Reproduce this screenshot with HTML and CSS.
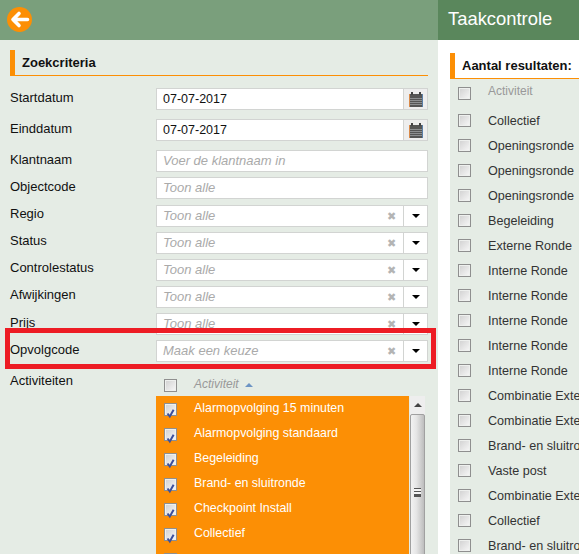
FILE: index.html
```html
<!DOCTYPE html>
<html lang="en">
<head>
    <meta charset="UTF-8">
    <meta name="viewport" content="width=device-width, initial-scale=1.0">
    <title>Taakcontrole</title>
    <link rel="stylesheet" href="styles.css">
</head>
<body>
    <div class="page">
        <div class="search">
            <div class="topbar">
                <a class="back" href="#">
                    <svg width="25" height="25" viewBox="0 0 25 25">
                        <circle cx="12.5" cy="12.5" r="12.5" fill="#fc8f05"/>
                        <path d="M20.5 12.5H6M12 6.5l-6 6 6 6" fill="none" stroke="#fff" stroke-width="3.6" stroke-linecap="round" stroke-linejoin="round"/>
                    </svg>
                </a>
            </div>

            <div class="search-body">
                <h2 class="section-title">Zoekcriteria</h2>

                <div class="row row-date">
                    <label>Startdatum</label>
                    <div class="field">
                        <span class="value date">07-07-2017</span>
                        <span class="addon addon-grey">
                            <svg class="cal" width="14" height="15" viewBox="0 0 14 15"><use href="#calendar"/></svg>
                        </span>
                    </div>
                </div>
                <div class="row row-date">
                    <label>Einddatum</label>
                    <div class="field">
                        <span class="value date">07-07-2017</span>
                        <span class="addon addon-grey">
                            <svg class="cal" width="14" height="15" viewBox="0 0 14 15"><use href="#calendar"/></svg>
                        </span>
                    </div>
                </div>
                <div class="row">
                    <label>Klantnaam</label>
                    <div class="field"><span class="value hint">Voer de klantnaam in</span></div>
                </div>
                <div class="row row-wide">
                    <label>Objectcode</label>
                    <div class="field"><span class="value hint">Toon alle</span></div>
                </div>
                <div class="row row-up">
                    <label>Regio</label>
                    <div class="field">
                        <span class="value hint">Toon alle</span>
                        <span class="clear">&#10006;</span>
                        <span class="addon"><i class="caret"></i></span>
                    </div>
                </div>
                <div class="row row-up">
                    <label>Status</label>
                    <div class="field">
                        <span class="value hint">Toon alle</span>
                        <span class="clear">&#10006;</span>
                        <span class="addon"><i class="caret"></i></span>
                    </div>
                </div>
                <div class="row row-up">
                    <label>Controlestatus</label>
                    <div class="field">
                        <span class="value hint">Toon alle</span>
                        <span class="clear">&#10006;</span>
                        <span class="addon"><i class="caret"></i></span>
                    </div>
                </div>
                <div class="row row-up">
                    <label>Afwijkingen</label>
                    <div class="field">
                        <span class="value hint">Toon alle</span>
                        <span class="clear">&#10006;</span>
                        <span class="addon"><i class="caret"></i></span>
                    </div>
                </div>
                <div class="row">
                    <label>Prijs</label>
                    <div class="field">
                        <span class="value hint">Toon alle</span>
                        <span class="clear">&#10006;</span>
                        <span class="addon"><i class="caret"></i></span>
                    </div>
                </div>
                <div class="row">
                    <label>Opvolgcode</label>
                    <div class="field">
                        <span class="value hint">Maak een keuze</span>
                        <span class="clear">&#10006;</span>
                        <span class="addon"><i class="caret"></i></span>
                    </div>
                </div>

                <div class="activities">
                    <label>Activiteiten</label>
                    <div class="act-table">
                        <div class="act-head">
                            <span class="check"></span>
                            <span class="act-title">Activiteit</span>
                            <i class="sort-up"></i>
                        </div>
                        <div class="act-scroll">
                            <ul class="act-list">
                                <li><span class="check on"><svg width="11" height="11" viewBox="0 0 11 11"><use href="#tick"/></svg></span>Alarmopvolging 15 minuten</li>
                                <li><span class="check on"><svg width="11" height="11" viewBox="0 0 11 11"><use href="#tick"/></svg></span>Alarmopvolging standaard</li>
                                <li><span class="check on"><svg width="11" height="11" viewBox="0 0 11 11"><use href="#tick"/></svg></span>Begeleiding</li>
                                <li><span class="check on"><svg width="11" height="11" viewBox="0 0 11 11"><use href="#tick"/></svg></span>Brand- en sluitronde</li>
                                <li><span class="check on"><svg width="11" height="11" viewBox="0 0 11 11"><use href="#tick"/></svg></span>Checkpoint Install</li>
                                <li><span class="check on"><svg width="11" height="11" viewBox="0 0 11 11"><use href="#tick"/></svg></span>Collectief</li>
                                <li><span class="check"></span></li>
                            </ul>
                            <div class="scrollbar">
                                <div class="scroll-up"><i></i></div>
                                <div class="scroll-thumb"><i></i></div>
                            </div>
                        </div>
                    </div>
                </div>
            </div>

            <div class="marker"></div>
        </div>

        <div class="results">
            <div class="results-bar">Taakcontrole</div>
            <div class="results-body">
                <h2 class="section-title">Aantal resultaten:</h2>
                <ul class="res-list">
                    <li class="res-head"><span class="check"></span>Activiteit</li>
                    <li><span class="check"></span>Collectief</li>
                    <li><span class="check"></span>Openingsronde</li>
                    <li><span class="check"></span>Openingsronde</li>
                    <li><span class="check"></span>Openingsronde</li>
                    <li><span class="check"></span>Begeleiding</li>
                    <li><span class="check"></span>Externe Ronde</li>
                    <li><span class="check"></span>Interne Ronde</li>
                    <li><span class="check"></span>Interne Ronde</li>
                    <li><span class="check"></span>Interne Ronde</li>
                    <li><span class="check"></span>Interne Ronde</li>
                    <li><span class="check"></span>Interne Ronde</li>
                    <li><span class="check"></span>Combinatie Externe Ronde</li>
                    <li><span class="check"></span>Combinatie Externe Ronde</li>
                    <li><span class="check"></span>Brand- en sluitronde</li>
                    <li><span class="check"></span>Vaste post</li>
                    <li><span class="check"></span>Combinatie Externe Ronde</li>
                    <li><span class="check"></span>Collectief</li>
                    <li><span class="check"></span>Brand- en sluitronde</li>
                </ul>
            </div>
        </div>
    </div>

    <!-- shared icons -->
    <svg class="defs" width="0" height="0">
        <symbol id="calendar" viewBox="0 0 14 15">
            <rect x="0" y="2" width="14" height="13" fill="#555"/>
            <rect x="2" y="0" width="2" height="3" fill="#444"/>
            <rect x="10" y="0" width="2" height="3" fill="#444"/>
            <rect x="0" y="2" width="1" height="13" fill="#d98a4a"/>
            <rect x="13" y="2" width="1" height="13" fill="#5a7fa8"/>
            <path d="M1.5 6.5h11M1.5 8.5h11M1.5 10.5h11M1.5 12.5h11" stroke="#c4c8cc" stroke-width="1" stroke-dasharray="1 1"/>
        </symbol>
        <symbol id="tick" viewBox="0 0 11 11">
            <path d="M2.5 5.5l2.3 3L8.6 1.8" fill="none" stroke="#3c4f9c" stroke-width="2"/>
        </symbol>
    </svg>
</body>
</html>
```

FILE: styles.css
```css
html, body {
    margin: 0;
    height: 100%;
    overflow: hidden;
}

body {
    font-family: "Liberation Sans", Arial, sans-serif;
    font-size: 13px;
    color: #111;
    background: #fff;
}

.page {
    display: flex;
    width: 579px;
    height: 554px;
    overflow: hidden;
}

.defs {
    position: absolute;
}

/* left panel */
.search {
    position: relative;
    flex: 0 0 438px;
    background: #e5ece5;
    overflow: hidden;
}

.topbar {
    height: 40px;
    background: #7a9f7c;
}

.back {
    display: block;
    width: 25px;
    height: 25px;
    padding: 7px;
}

.search-body {
    padding: 10px 10px 0;
}

.section-title {
    margin: 0;
    height: 25px;
    padding-left: 7px;
    border-left: 5px solid #fc8f05;
    border-bottom: 1px solid #fc8f05;
    font-size: 13px;
    line-height: 26px;
    font-weight: bold;
    color: #111;
}

.section-title + .row {
    margin-top: 12px;
}

.row {
    display: flex;
    height: 22px;
    margin-bottom: 5px;
}

.row-date {
    margin-bottom: 9px;
}

.row-wide {
    margin-bottom: 6px;
}

.row label {
    flex: 0 0 146px;
    line-height: 20px;
}

.row-up label {
    line-height: 18px;
}

.field {
    flex: 1;
    display: flex;
    align-items: center;
    box-sizing: border-box;
    height: 22px;
    background: #fff;
    border: 1px solid #d2d4d2;
}

.value {
    flex: 1;
    padding-left: 6px;
    line-height: 20px;
    white-space: nowrap;
}

.date {
    font-size: 12.5px;
}

.hint {
    font-style: italic;
    color: #aaa;
}

.addon {
    flex: 0 0 23px;
    height: 20px;
    display: flex;
    align-items: center;
    justify-content: center;
    border-left: 1px solid #d2d4d2;
}

.addon-grey {
    background: #eee;
}

.clear {
    width: 10px;
    margin-right: 6px;
    font-size: 11px;
    line-height: 20px;
    color: #b4b4b4;
}

.caret {
    width: 0;
    height: 0;
    border-left: 4px solid transparent;
    border-right: 4px solid transparent;
    border-top: 4px solid #000;
}

/* activiteiten */
.activities {
    display: flex;
    margin-top: 11px;
}

.activities label {
    flex: 0 0 146px;
    line-height: 16px;
}

.act-table {
    width: 269px;
}

.act-head {
    display: flex;
    align-items: center;
    box-sizing: border-box;
    height: 23px;
    padding: 2px 0 0 8px;
}

.act-title {
    margin: -3px 0 0 17px;
    font-style: italic;
    font-size: 12px;
    color: #999;
}

.sort-up {
    margin: -2px 0 0 6px;
    width: 0;
    height: 0;
    border-left: 4px solid transparent;
    border-right: 4px solid transparent;
    border-bottom: 4px solid #6d94c4;
}

.act-scroll {
    display: flex;
}

.act-list {
    flex: 0 0 253px;
    margin: 0;
    padding: 0;
    list-style: none;
    background: #fc8f05;
}

.act-list li {
    display: flex;
    align-items: flex-start;
    height: 25px;
    padding-left: 8px;
    color: #fff;
    font-size: 12.4px;
    line-height: 23px;
}

.act-list li:first-child {
    margin-top: 1px;
}

.act-list .check {
    margin-top: 6px;
}

.act-list .check,
.res-list .check {
    margin-right: 17px;
}

.check {
    flex: none;
    display: block;
    box-sizing: border-box;
    width: 13px;
    height: 13px;
    border: 1px solid #8f8f8f;
    background: linear-gradient(135deg, #d0d0d0, #f8f8f8);
    box-shadow: inset 0 0 0 1px #eef0ee;
}

.scrollbar {
    width: 16px;
    margin-left: 1px;
    background: #eee;
}

.scroll-up {
    display: flex;
    align-items: center;
    justify-content: center;
    height: 18px;
}

.scroll-up i {
    width: 0;
    height: 0;
    border-left: 4px solid transparent;
    border-right: 4px solid transparent;
    border-bottom: 4px solid #444;
}

.scroll-thumb {
    display: flex;
    align-items: center;
    justify-content: center;
    box-sizing: border-box;
    height: 156px;
    border: 1px solid #a0a0a0;
    border-radius: 2px;
    background: linear-gradient(to right, #f2f2f2, #e6e6e6 40%, #bdbdbd);
}

.scroll-thumb i {
    width: 7px;
    height: 7px;
    border-top: 1px solid #555;
    border-bottom: 1px solid #555;
    background: linear-gradient(#f4f4f4 2px, #555 2px, #555 3px, #f4f4f4 3px, #f4f4f4 5px, #555 5px);
}

/* red marker round the Opvolgcode row */
.marker {
    position: absolute;
    left: 5px;
    top: 328px;
    width: 431px;
    height: 41px;
    box-sizing: border-box;
    border: 5px solid #ed1c24;
}

/* right panel */
.results {
    flex: 1;
    min-width: 0;
    background: #fff;
}

.results-bar {
    height: 40px;
    padding-left: 10px;
    background: #5a875c;
    color: #fff;
    font-size: 18.4px;
    line-height: 38px;
    white-space: nowrap;
}

.results-body {
    padding: 13px 0 0 12px;
}

.results-body .section-title {
    height: 25px;
    white-space: nowrap;
}

.res-list {
    margin: 0;
    padding: 0;
    list-style: none;
    background: #e5ece5;
    height: 480px;
    white-space: nowrap;
}

.res-list li {
    display: flex;
    align-items: center;
    height: 25px;
    padding-left: 8px;
    font-size: 12.6px;
    color: #333;
}

.res-list .res-head {
    align-items: flex-start;
    height: 21px;
    padding-top: 8px;
    font-size: 12px;
    line-height: 8px;
    color: #999;
}
```
